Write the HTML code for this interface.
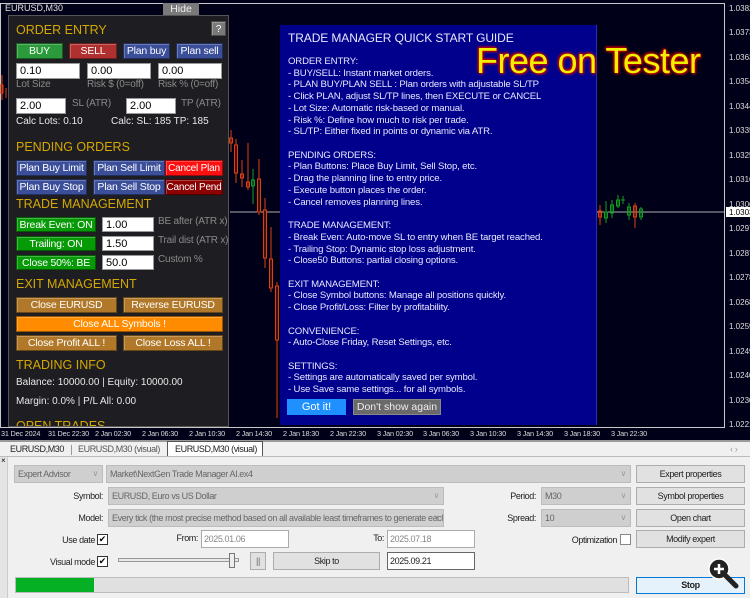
<!DOCTYPE html>
<html><head><meta charset="utf-8"><style>
*{margin:0;padding:0;box-sizing:border-box;white-space:nowrap}
body{width:750px;height:598px;overflow:hidden;background:#f0f0f0;font-family:"Liberation Sans",sans-serif;position:relative}
.a{position:absolute}
#chart{position:absolute;left:0;top:0;width:750px;height:440px;background:#000018}
.pl{color:#e0e0e0;font-size:9px}
.btn{position:absolute;color:#fff;font-size:10.5px;letter-spacing:-.2px;text-align:center;line-height:15px;border:1px solid rgba(0,0,0,.4);box-shadow:inset 1px 1px 0 rgba(255,255,255,.25);overflow:hidden}
.inp{position:absolute;background:#fff;border:1px solid #999;font-size:11px;color:#000;padding-left:3px;line-height:14px}
.h{position:absolute;color:#d4a800;font-size:12.5px}
.lb{position:absolute;color:#8a8a8a;font-size:10px;letter-spacing:-.2px}
.wt{position:absolute;color:#e8e8e8;font-size:10px}
.g{position:absolute;left:288px;color:#e8e8ff;font-size:9.6px;letter-spacing:-.15px;line-height:11.72px;top:56px;white-space:pre}
.t{font-size:9px;color:#222;letter-spacing:-.4px}
.r{text-align:right}
.cb{position:absolute;background:#cfcfcf;border:1px solid #bcbcbc;font-size:9px;color:#666;padding-left:3px;line-height:16px;letter-spacing:-.4px;overflow:hidden}
.cb:after{content:"\2228";position:absolute;right:4px;top:0;color:#999;font-size:8px}
.wb{position:absolute;background:#e1e1e1;border:1px solid #adadad;font-size:9px;color:#222;text-align:center;letter-spacing:-.4px}
.ck{position:absolute;width:11px;height:11px;background:#fff;border:1px solid #333;font-size:9px;line-height:9px;text-align:center}
.db{position:absolute;background:#fff;border:1px solid #aaa;font-size:9px;color:#888;padding-left:2px;line-height:16px;letter-spacing:-.4px}
</style></head><body>
<div id="chart">
<svg width="750" height="440" style="position:absolute;left:0;top:0">
<rect x="0.5" y="3.5" width="724" height="424" fill="none" stroke="#c8c8c8"/>
<line x1="230" y1="212" x2="724" y2="212" stroke="#b0b0b0"/>
<g stroke="#e04010" fill="none">
<line x1="2" y1="75" x2="2" y2="100"/><rect x="0" y="85" width="3" height="8"/><line x1="6" y1="88" x2="6" y2="98"/>
<line x1="231" y1="130" x2="231" y2="152"/><rect x="229.5" y="138" width="3" height="5"/>
<line x1="236" y1="139" x2="236" y2="183"/><rect x="234.5" y="145" width="3" height="28" fill="#401008"/>
<line x1="242" y1="160" x2="242" y2="187"/><rect x="240.5" y="174" width="3" height="4"/>
<line x1="248" y1="143" x2="248" y2="190"/><rect x="246.5" y="182" width="3" height="5"/>
<line x1="259" y1="159" x2="259" y2="215"/><rect x="257.5" y="179" width="3" height="33" fill="#401008"/>
<line x1="265" y1="198" x2="265" y2="268"/><rect x="263.5" y="210" width="3" height="48" fill="#401008"/>
<line x1="271" y1="227" x2="271" y2="292"/><rect x="269.5" y="259" width="3" height="29" fill="#401008"/>
<line x1="277" y1="282" x2="277" y2="418"/><rect x="275.5" y="286" width="3" height="54" fill="#401008"/>
<line x1="600" y1="205" x2="600" y2="225"/><rect x="598.5" y="211" width="3" height="6"/>
<line x1="635" y1="203" x2="635" y2="228"/><rect x="633.5" y="206" width="3" height="11"/>
</g>
<g stroke="#10a020" fill="none">
<line x1="253" y1="169" x2="253" y2="204"/><rect x="251.5" y="180" width="3" height="6"/>
<line x1="606" y1="201" x2="606" y2="223"/><rect x="604.5" y="212" width="3" height="6"/>
<line x1="612" y1="200" x2="612" y2="218"/><rect x="610.5" y="205" width="3" height="8"/>
<line x1="618" y1="195" x2="618" y2="208"/><rect x="616.5" y="200" width="3" height="6"/>
<line x1="623" y1="196" x2="623" y2="204"/><line x1="621" y1="200" x2="625" y2="200"/>
<line x1="629" y1="203" x2="629" y2="220"/><rect x="627.5" y="207" width="3" height="8"/>
<line x1="641" y1="207" x2="641" y2="220"/><rect x="639.5" y="209" width="3" height="8"/>
</g>
<g fill="#ddd" font-family="Liberation Sans" font-size="8">
<text x="729" y="11">1.0382</text><text x="729" y="35">1.0373</text><text x="729" y="60">1.0363</text><text x="729" y="84">1.0354</text><text x="729" y="109">1.0344</text><text x="729" y="133">1.0335</text><text x="729" y="158">1.0325</text><text x="729" y="182">1.0316</text><text x="729" y="207">1.0306</text><text x="729" y="231">1.0297</text><text x="729" y="256">1.0287</text><text x="729" y="280">1.0278</text><text x="729" y="305">1.0268</text><text x="729" y="329">1.0259</text><text x="729" y="354">1.0249</text><text x="729" y="378">1.0240</text><text x="729" y="403">1.0230</text><text x="729" y="427">1.0221</text>
</g>
<rect x="726" y="207" width="24" height="10" fill="#fff"/><text x="729" y="215" font-size="8" font-family="Liberation Sans" fill="#000">1.0303</text>
<g fill="#ddd" font-family="Liberation Sans" font-size="7.3" letter-spacing="-0.2">
<text x="1" y="436">31 Dec 2024</text><text x="48" y="436">31 Dec 22:30</text><text x="95" y="436">2 Jan 02:30</text><text x="142" y="436">2 Jan 06:30</text><text x="189" y="436">2 Jan 10:30</text><text x="236" y="436">2 Jan 14:30</text><text x="283" y="436">2 Jan 18:30</text><text x="330" y="436">2 Jan 22:30</text><text x="377" y="436">3 Jan 02:30</text><text x="423" y="436">3 Jan 06:30</text><text x="470" y="436">3 Jan 10:30</text><text x="517" y="436">3 Jan 14:30</text><text x="564" y="436">3 Jan 18:30</text><text x="611" y="436">3 Jan 22:30</text>
</g>
</svg>
<div class="a pl" style="left:5px;top:3px">EURUSD,M30</div>
<div class="a" style="left:163px;top:3px;width:36px;height:13px;background:#7a7a7a;color:#eee;font-size:10.5px;text-align:center;line-height:13px">Hide</div>
<div class="a" style="left:8px;top:15px;width:221px;height:412px;background:#1e1e22;border:1px solid #555;overflow:hidden">
<div class="h" style="left:7px;top:7px">ORDER ENTRY</div>
<div class="btn" style="left:202px;top:5px;width:15px;height:15px;background:#7a7a7a;font-size:10px">?</div>
<div class="btn" style="left:7px;top:27px;width:47px;height:16px;background:#2a9a3a">BUY</div>
<div class="btn" style="left:60px;top:27px;width:48px;height:16px;background:#b03030">SELL</div>
<div class="btn" style="left:114px;top:27px;width:47px;height:16px;background:#3a4e9a">Plan buy</div>
<div class="btn" style="left:167px;top:27px;width:47px;height:16px;background:#3a4e9a">Plan sell</div>
<div class="inp" style="left:7px;top:47px;width:64px;height:16px">0.10</div>
<div class="inp" style="left:78px;top:47px;width:64px;height:16px">0.00</div>
<div class="inp" style="left:149px;top:47px;width:64px;height:16px">0.00</div>
<div class="lb" style="left:7px;top:63px">Lot Size</div>
<div class="lb" style="left:78px;top:63px">Risk $ (0=off)</div>
<div class="lb" style="left:149px;top:63px">Risk % (0=off)</div>
<div class="inp" style="left:7px;top:82px;width:50px;height:16px">2.00</div>
<div class="lb" style="left:63px;top:82px">SL (ATR)</div>
<div class="inp" style="left:117px;top:82px;width:50px;height:16px">2.00</div>
<div class="lb" style="left:172px;top:82px">TP (ATR)</div>
<div class="wt" style="left:7px;top:100px">Calc Lots: 0.10</div>
<div class="wt" style="left:102px;top:100px">Calc: SL: 185 TP: 185</div>
<div class="h" style="left:7px;top:124px">PENDING ORDERS</div>
<div class="btn" style="left:7px;top:144px;width:71px;height:16px;background:#3a4e9a">Plan Buy Limit</div>
<div class="btn" style="left:84px;top:144px;width:72px;height:16px;background:#3a4e9a">Plan Sell Limit</div>
<div class="btn" style="left:156px;top:144px;width:58px;height:16px;background:#ff1010;font-size:10px">Cancel Plan</div>
<div class="btn" style="left:7px;top:163px;width:71px;height:16px;background:#3a4e9a">Plan Buy Stop</div>
<div class="btn" style="left:84px;top:163px;width:72px;height:16px;background:#3a4e9a">Plan Sell Stop</div>
<div class="btn" style="left:156px;top:163px;width:58px;height:16px;background:#8b0000;font-size:10px">Cancel Pend</div>
<div class="h" style="left:7px;top:181px">TRADE MANAGEMENT</div>
<div class="btn" style="left:7px;top:201px;width:80px;height:15px;background:#079a07">Break Even: ON</div>
<div class="inp" style="left:93px;top:201px;width:52px;height:15px">1.00</div>
<div class="lb" style="left:149px;top:200px">BE after (ATR x)</div>
<div class="btn" style="left:7px;top:220px;width:80px;height:15px;background:#079a07">Trailing: ON</div>
<div class="inp" style="left:93px;top:220px;width:52px;height:15px">1.50</div>
<div class="lb" style="left:149px;top:219px">Trail dist (ATR x)</div>
<div class="btn" style="left:7px;top:239px;width:80px;height:15px;background:#079a07">Close 50%: BE</div>
<div class="inp" style="left:93px;top:239px;width:52px;height:15px">50.0</div>
<div class="lb" style="left:149px;top:238px">Custom %</div>
<div class="h" style="left:7px;top:261px">EXIT MANAGEMENT</div>
<div class="btn" style="left:7px;top:281px;width:101px;height:16px;background:#b07828">Close EURUSD</div>
<div class="btn" style="left:114px;top:281px;width:100px;height:16px;background:#b07828">Reverse EURUSD</div>
<div class="btn" style="left:7px;top:300px;width:207px;height:16px;background:#ff8c00">Close ALL Symbols !</div>
<div class="btn" style="left:7px;top:319px;width:101px;height:16px;background:#b07828">Close Profit ALL !</div>
<div class="btn" style="left:114px;top:319px;width:100px;height:16px;background:#b07828">Close Loss ALL !</div>
<div class="h" style="left:7px;top:342px">TRADING INFO</div>
<div class="wt" style="left:7px;top:361px">Balance: 10000.00 | Equity: 10000.00</div>
<div class="wt" style="left:7px;top:380px">Margin: 0.0% | P/L All: 0.00</div>
<div class="h" style="left:7px;top:403px">OPEN TRADES</div>
</div>
<div class="a" style="left:280px;top:25px;width:317px;height:400px;background:#00008c;border-right:1px solid #2030c0"></div>
<div class="a" style="left:288px;top:31px;color:#e8e8ff;font-size:12px;letter-spacing:-.1px">TRADE MANAGER QUICK START GUIDE</div>
<div class="g">ORDER ENTRY:
- BUY/SELL: Instant market orders.
- PLAN BUY/PLAN SELL : Plan orders with adjustable SL/TP
- Click PLAN, adjust SL/TP lines, then EXECUTE or CANCEL
- Lot Size: Automatic risk-based or manual.
- Risk %: Define how much to risk per trade.
- SL/TP: Either fixed in points or dynamic via ATR.

PENDING ORDERS:
- Plan Buttons: Place Buy Limit, Sell Stop, etc.
- Drag the planning line to entry price.
- Execute button places the order.
- Cancel removes planning lines.

TRADE MANAGEMENT:
- Break Even: Auto-move SL to entry when BE target reached.
- Trailing Stop: Dynamic stop loss adjustment.
- Close50 Buttons: partial closing options.

EXIT MANAGEMENT:
- Close Symbol buttons: Manage all positions quickly.
- Close Profit/Loss: Filter by profitability.

CONVENIENCE:
- Auto-Close Friday, Reset Settings, etc.

SETTINGS:
- Settings are automatically saved per symbol.
- Use Save same settings... for all symbols.</div>
<div class="a" style="left:287px;top:399px;width:59px;height:16px;background:#1e90ff;color:#fff;font-size:11px;text-align:center;line-height:16px">Got it!</div>
<div class="a" style="left:353px;top:399px;width:88px;height:16px;background:#6a6a6a;color:#eee;font-size:10.5px;text-align:center;line-height:15px;border:1px solid #888">Don't show again</div>
<div class="a" style="left:476px;top:40px;color:#f0f000;font-size:36px;letter-spacing:-.5px;text-shadow:0 0 3px #d00000,1px 1px 2px #d00000,-1px -1px 2px #d00000">Free on Tester</div>
</div>
<div class="a" style="left:0;top:440px;width:750px;height:2px;background:#9a9a9a"></div>
<div class="a t" style="left:10px;top:444px">EURUSD,M30</div>
<div class="a" style="left:71px;top:445px;width:1px;height:10px;background:#999"></div>
<div class="a t" style="left:78px;top:444px;color:#555">EURUSD,M30 (visual)</div>
<div class="a t" style="left:167px;top:441px;width:96px;height:16px;background:#fff;border:1px solid #555;border-bottom:none;padding-left:7px;line-height:14px">EURUSD,M30 (visual)</div>
<div class="a" style="left:0;top:456px;width:750px;height:1px;background:#bbb"></div>
<div class="a t" style="left:730px;top:444px;color:#999">&#8249; &#8250;</div>
<div class="a" style="left:0;top:457px;width:8px;height:141px;background:#e4e4e4;border-right:1px solid #ccc"></div>
<div class="a" style="left:1px;top:456px;font-size:8px">×</div>
<div class="cb" style="left:14px;top:465px;width:89px;height:18px">Expert Advisor</div>
<div class="cb" style="left:106px;top:465px;width:525px;height:18px">Market\NextGen Trade Manager AI.ex4</div>
<div class="wb" style="left:636px;top:465px;width:109px;height:18px;line-height:16px">Expert properties</div>
<div class="a t r" style="left:40px;width:63px;top:491px">Symbol:</div>
<div class="cb" style="left:108px;top:487px;width:336px;height:18px">EURUSD, Euro vs US Dollar</div>
<div class="a t r" style="left:490px;width:46px;top:491px">Period:</div>
<div class="cb" style="left:541px;top:487px;width:90px;height:18px">M30</div>
<div class="wb" style="left:636px;top:487px;width:109px;height:18px;line-height:16px">Symbol properties</div>
<div class="a t r" style="left:40px;width:63px;top:513px">Model:</div>
<div class="cb" style="left:108px;top:509px;width:336px;height:18px;padding-right:16px">Every tick (the most precise method based on all available least timeframes to generate each</div>
<div class="a t r" style="left:490px;width:46px;top:513px">Spread:</div>
<div class="cb" style="left:541px;top:509px;width:90px;height:18px">10</div>
<div class="wb" style="left:636px;top:509px;width:109px;height:18px;line-height:16px">Open chart</div>
<div class="a t r" style="left:40px;width:55px;top:535px">Use date</div>
<div class="ck" style="left:97px;top:534px">✔</div>
<div class="a t r" style="left:160px;width:38px;top:533px">From:</div>
<div class="db" style="left:201px;top:530px;width:88px;height:18px">2025.01.06</div>
<div class="a t r" style="left:350px;width:34px;top:533px">To:</div>
<div class="db" style="left:387px;top:530px;width:88px;height:18px">2025.07.18</div>
<div class="a t r" style="left:540px;width:77px;top:535px">Optimization</div>
<div class="ck" style="left:620px;top:534px;border-color:#888"></div>
<div class="wb" style="left:636px;top:530px;width:109px;height:18px;line-height:16px">Modify expert</div>
<div class="a t r" style="left:30px;width:65px;top:557px">Visual mode</div>
<div class="ck" style="left:97px;top:556px">✔</div>
<div class="a" style="left:118px;top:558px;width:121px;height:4px;border:1px solid #999;background:#e8e8e8"></div>
<div class="a" style="left:229px;top:553px;width:6px;height:15px;border:1px solid #777;background:#eee"></div>
<div class="wb" style="left:250px;top:552px;width:16px;height:18px;line-height:16px;color:#666">||</div>
<div class="wb" style="left:273px;top:552px;width:107px;height:18px;line-height:16px">Skip to</div>
<div class="db" style="left:387px;top:552px;width:88px;height:18px;color:#222;border-color:#666">2025.09.21</div>
<div class="a" style="left:15px;top:577px;width:614px;height:16px;background:#e0e0e0;border:1px solid #bcbcbc"></div>
<div class="a" style="left:16px;top:578px;width:78px;height:14px;background:#06b025"></div>
<div class="wb" style="left:636px;top:577px;width:109px;height:17px;line-height:15px;background:#e5f1fb;border-color:#0078d7;font-weight:bold">Stop</div>
<svg class="a" style="left:706px;top:556px" width="36" height="36"><circle cx="13" cy="13" r="10" fill="#222" stroke="#fff" stroke-width="1.5"/><line x1="20" y1="20" x2="30" y2="30" stroke="#222" stroke-width="5" stroke-linecap="round"/><path d="M13 8v10M8 13h10" stroke="#fff" stroke-width="2.5"/></svg>
</body></html>
